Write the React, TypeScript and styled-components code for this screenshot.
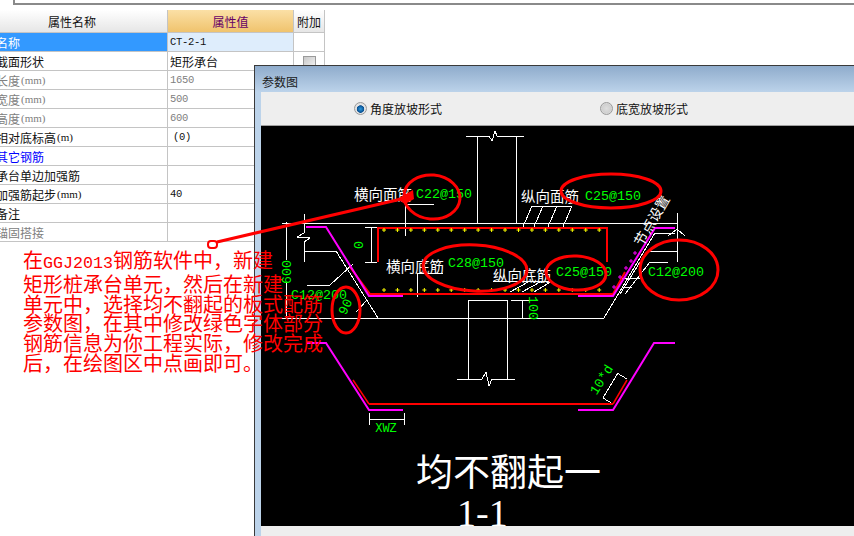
import React from 'react';
import styled, { createGlobalStyle } from 'styled-components';

const CJK = `'Noto Sans CJK SC', 'Liberation Sans', sans-serif`;
const MONO = `'Liberation Mono', 'Noto Sans CJK SC', monospace`;

const GlobalStyle = createGlobalStyle`
  html, body {
    margin: 0;
    padding: 0;
    background: #fff;
  }
`;

const Page = styled.div`
  position: relative;
  width: 854px;
  height: 536px;
  overflow: hidden;
  background: #fff;
  font-family: ${CJK};
`;

const TopFrame = styled.div`
  height: 3px;
  margin: 0 0 5px 13px;
  border-left: 2px solid #8a8a8a;
  border-bottom: 2px solid #8a8a8a;
`;

const PropertyGrid = styled.div`
  display: grid;
  grid-template-columns: 172px 126px 31px;
  width: 329px;
  margin-left: -4px;
`;

const HeaderCell = styled.div<{ $variant?: 'gold' | 'plain'; $shift?: number }>`
  box-sizing: border-box;
  height: 23px;
  display: flex;
  align-items: center;
  justify-content: center;
  padding-right: ${p => p.$shift || 0}px;
  font-size: 12px;
  color: ${p => (p.$variant === 'gold' ? '#660066' : '#111')};
  background: ${p =>
    p.$variant === 'gold'
      ? 'linear-gradient(#fbe0a6, #f0c36d)'
      : 'linear-gradient(#ffffff, #e6e6e6)'};
  border-right: 1px solid #c4c4c4;
  border-bottom: 1px solid #c4c4c4;
`;

const LabelCell = styled.div<{ $tone?: string; $selected?: boolean }>`
  box-sizing: border-box;
  height: 19px;
  display: flex;
  align-items: center;
  font-size: 12px;
  white-space: nowrap;
  overflow: hidden;
  color: ${p => (p.$selected ? '#fff' : p.$tone || '#111')};
  background: ${p => (p.$selected ? '#3399ff' : '#fff')};
  border-right: 1px solid #c4c4c4;
  border-bottom: 1px solid #c4c4c4;
`;

const Unit = styled.span`
  font-family: 'Liberation Serif', serif;
  font-size: 11px;
  margin-left: 1px;
`;

const ValueCell = styled.div<{ $tone?: string; $selected?: boolean; $latin?: boolean; $indent?: number }>`
  box-sizing: border-box;
  height: 19px;
  display: flex;
  align-items: center;
  padding-left: ${p => p.$indent || 2}px;
  white-space: pre;
  font-family: ${p => (p.$latin ? MONO : CJK)};
  font-size: ${p => (p.$latin ? '10.5px' : '12px')};
  letter-spacing: ${p => (p.$latin ? '-0.3px' : '0')};
  color: ${p => p.$tone || '#111'};
  background: ${p => (p.$selected ? '#deedfc' : '#fff')};
  border-right: 1px solid #c4c4c4;
  border-bottom: 1px solid #c4c4c4;
`;

const ExtraCell = styled.div`
  box-sizing: border-box;
  height: 19px;
  display: flex;
  align-items: center;
  justify-content: center;
  background: #fff;
  border-right: 1px solid #c4c4c4;
  border-bottom: 1px solid #c4c4c4;
`;

const CheckBox = styled.div`
  box-sizing: border-box;
  width: 13px;
  height: 13px;
  margin-top: 3px;
  border: 1px solid #9a9a9a;
  background: linear-gradient(135deg, #c8c8c8, #f4f4f4);
`;

const Dialog = styled.div`
  position: absolute;
  left: 254px;
  top: 65px;
  width: 620px;
  height: 490px;
  box-sizing: border-box;
  padding: 0 0 0 6px;
  border: 1px solid #3a3a3a;
  background: linear-gradient(#8faccc 0, #bcd3ea 26px, #bcd3ea 100%);
`;

const DialogTitle = styled.div`
  height: 26px;
  padding: 7px 0 0 1px;
  box-sizing: border-box;
  font-size: 12px;
  line-height: 18px;
  color: #1a1a1a;
`;

const Toolbar = styled.div`
  height: 33px;
  display: flex;
  align-items: center;
  padding-left: 93px;
  background: #eeeeee;
  border-bottom: 1px solid #a0a0a0;
`;

const Option = styled.label`
  display: flex;
  align-items: center;
  gap: 3px;
  width: 246px;
  font-size: 12px;
  color: #111;
`;

const Radio = styled.span<{ $checked?: boolean }>`
  box-sizing: border-box;
  width: 13px;
  height: 13px;
  border-radius: 50%;
  border: 1px solid #9a9a9a;
  background: ${p =>
    p.$checked
      ? 'radial-gradient(circle at 50% 55%, #2a9ae0 0, #0a4f90 42%, #e8e8e8 50%, #cfcfcf 100%)'
      : 'radial-gradient(circle, #dedede 0, #d0d0d0 55%, #f0f0f0 100%)'};
`;

const DrawingArea = styled.div`
  height: 400px;
  background: #000;
`;

const DialogFooter = styled.div`
  height: 30px;
  background: #eeeeee;
`;

const Drawing = styled.svg`
  display: block;
  width: 593px;
  height: 400px;
`;

const Markup = styled.svg`
  position: absolute;
  left: 0;
  top: 0;
  width: 854px;
  height: 536px;
  pointer-events: none;
`;

const Note = styled.div`
  position: absolute;
  left: 23px;
  top: 250px;
  font-size: 20px;
  line-height: 19.8px;
  color: #ff0000;
  white-space: nowrap;
`;

const NoteLatin = styled.span`
  font-family: 'Liberation Mono', monospace;
  font-size: 16.67px;
`;

const rows = [
  { label: '名称', value: 'CT-2-1', selected: true, latin: true },
  { label: '截面形状', value: '矩形承台', check: true },
  { label: '长度', unit: '(mm)', value: '1650', tone: '#808080', latin: true },
  { label: '宽度', unit: '(mm)', value: '500', tone: '#808080', latin: true },
  { label: '高度', unit: '(mm)', value: '600', tone: '#808080', latin: true },
  { label: '相对底标高', unit: '(m)', value: '(0)', latin: true, indent: 5 },
  { label: '其它钢筋', value: '', labelTone: '#0000ff' },
  { label: '承台单边加强筋', value: '' },
  { label: '加强筋起步', unit: '(mm)', value: '40', latin: true },
  { label: '备注', value: '' },
  { label: '锚固搭接', value: '', labelTone: '#808080' },
];

const WHITE_LINES = [
  // top column + break
  'M466 136H489L492 141L495 131L497 136H524',
  'M477 136V223M516 136V223',
  // footing outline
  'M282 223H677',
  'M281 318H378M378 318H604L655 233H675',
  'M336 251L378 318M304 251H336',
  'M304 214V233L297 237L310 238L304 242V262',
  'M286 222V260M286 283V318',
  'M307 285H330L353 264M356 312L367 300',
  // dims
  'M365 227H377M371 227V262M365 262H377',
  'M405 204H434M405 204V236',
  'M417 273H443M417 273V297',
  'M493 281H550',
  // hatch top
  'M532 206H572M532 206L522 229M543 206L533 229M557 206L547 229M572 206L562 229',
  // hatch bottom
  'M510 292L530 281M522 292L542 281M534 292L552 281',
  // right side
  'M677 213V262M668 236L677 229L685 236',
  'M647 251H677M650 262H668',
  'M622 278H640M622 287H632M640 262L620 294M650 262L625 294',
  // lower column
  'M468 300H507M468 300V379M507 300V379',
  'M457 379H482L486 372L489 386L492 379H515',
  'M511 300H532M522 300V318M515 318H530',
  // lower dims
  'M369 419H404M369 413V425M404 413V425',
  'M618 373L603 398M617 373L627 379M603 398L613 404',
];

const FOOTING_PLUS_X = Array.from({ length: 17 }, (_, i) => 384 + i * 13.45);
const SLOPE_PLUS = [
  [635, 253],
  [631, 261],
  [626, 268],
  [620, 277],
  [614, 287],
];

const plusPath = (x: number, y: number) => `M${x - 2} ${y}H${x + 2}M${x} ${y - 2}V${y + 2}`;

const greenFont = { fontFamily: MONO, fontSize: 13.3, fill: '#00ff00' };
const whiteFont = { fontFamily: CJK, fontSize: 14.5, fill: '#ffffff' };

const GreenText = ({ x, y, rotate, children }: { x: number; y: number; rotate?: number; children: string }) => (
  <text
    {...greenFont}
    x={x}
    y={y}
    textAnchor="middle"
    dominantBaseline="central"
    transform={rotate ? `rotate(${rotate} ${x} ${y})` : undefined}
  >
    {children}
  </text>
);

const WhiteText = ({ x, y, children }: { x: number; y: number; children: string }) => (
  <text {...whiteFont} x={x} y={y} dominantBaseline="central">
    {children}
  </text>
);

// section drawing, viewBox is in page pixels so the numbers read off the screenshot directly
const SectionDrawing = () => (
  <Drawing viewBox="261 126 593 400">
    <path d={WHITE_LINES.join(' ')} fill="none" stroke="#fff" strokeWidth={1} shapeRendering="crispEdges" />
    <path
      d="M378 262V228H607V262M350 267L370 294H613L625 272"
      fill="none"
      stroke="#ff0000"
      strokeWidth={2}
    />
    <path
      d="M306 227H326L369 296H403M578 296H613L655 228H675"
      fill="none"
      stroke="#ff00ff"
      strokeWidth={2}
    />
    <path
      d="M307 343H326L369 410H403M578 410H613L654 343H675"
      fill="none"
      stroke="#ff00ff"
      strokeWidth={2}
    />
    <path d="M369 404H613" fill="none" stroke="#ff0000" strokeWidth={2} />
    <path d="M353 380L369 404M613 404L627 380" fill="none" stroke="#ff0000" strokeWidth={1.5} />
    <path
      d={FOOTING_PLUS_X.map(x => plusPath(x, 230) + plusPath(x, 290)).join(' ')}
      stroke="#ffff00"
      strokeWidth={1}
      fill="none"
    />
    <path d={SLOPE_PLUS.map(([x, y]) => plusPath(x, y)).join(' ')} stroke="#ff00ff" strokeWidth={1} fill="none" />

    <WhiteText x={354} y={193}>横向面筋</WhiteText>
    <WhiteText x={521} y={195}>纵向面筋</WhiteText>
    <WhiteText x={386} y={265}>横向底筋</WhiteText>
    <WhiteText x={493} y={274}>纵向底筋</WhiteText>
    <text {...whiteFont} fontSize={14} x={651} y={220} textAnchor="middle" dominantBaseline="central" transform="rotate(-60 651 220)">
      节点设置
    </text>

    <GreenText x={444} y={194}>C22@150</GreenText>
    <GreenText x={613} y={196}>C25@150</GreenText>
    <GreenText x={476} y={263}>C28@150</GreenText>
    <GreenText x={584} y={272}>C25@150</GreenText>
    <GreenText x={676} y={272}>C12@200</GreenText>
    <GreenText x={319} y={295}>C12@200</GreenText>
    <GreenText x={287} y={272} rotate={-90}>600</GreenText>
    <GreenText x={359} y={245} rotate={-90}>0</GreenText>
    <GreenText x={346} y={307} rotate={-65}>90</GreenText>
    <GreenText x={532} y={308} rotate={90}>100</GreenText>
    <GreenText x={602} y={380} rotate={-58}>10*d</GreenText>
    <text {...greenFont} fontSize={12} x={386} y={429} textAnchor="middle" dominantBaseline="central">
      XWZ
    </text>

    <text x={416} y={470} fontFamily={CJK} fontSize={37} fill="#fff" dominantBaseline="central">
      均不翻起一
    </text>
    <text x={457} y={513} fontFamily="'Liberation Serif', serif" fontSize={38} fill="#fff" dominantBaseline="central">
      1-1
    </text>
  </Drawing>
);

const ELLIPSES = [
  { cx: 432, cy: 197, rx: 28, ry: 22, tilt: 5 },
  { cx: 611, cy: 191, rx: 50, ry: 17, tilt: 0 },
  { cx: 475, cy: 268, rx: 52, ry: 23, tilt: 3 },
  { cx: 576, cy: 273, rx: 30, ry: 17, tilt: 3 },
  { cx: 679, cy: 270, rx: 39, ry: 30, tilt: 0 },
  { cx: 346, cy: 310, rx: 14, ry: 23, tilt: 0 },
];

const Annotations = () => (
  <Markup viewBox="0 0 854 536">
    <rect x={208} y={241} width={9} height={7} rx={3} fill="#fff" stroke="#ff0000" strokeWidth={2} />
    <path d="M217 242L410 197" stroke="#ff0000" strokeWidth={3} fill="none" />
    <polygon points="397,199 413,190 414,199 405,204" fill="#ff0000" />
    {ELLIPSES.map(e => (
      <ellipse
        key={e.cx}
        cx={e.cx}
        cy={e.cy}
        rx={e.rx}
        ry={e.ry}
        fill="none"
        stroke="#ff0000"
        strokeWidth={3}
        transform={`rotate(${e.tilt} ${e.cx} ${e.cy})`}
      />
    ))}
  </Markup>
);

export default function App(): JSX.Element {
  return (
    <Page>
      <GlobalStyle />
      <TopFrame />
      <PropertyGrid>
        <HeaderCell $shift={19}>属性名称</HeaderCell>
        <HeaderCell $variant="gold">属性值</HeaderCell>
        <HeaderCell>附加</HeaderCell>
        {rows.map(row => (
          <React.Fragment key={row.label}>
            <LabelCell $selected={row.selected} $tone={row.labelTone || row.tone}>
              {row.label}
              {row.unit && <Unit>{row.unit}</Unit>}
            </LabelCell>
            <ValueCell $selected={row.selected} $tone={row.tone} $latin={row.latin} $indent={row.indent}>
              {row.value}
            </ValueCell>
            <ExtraCell>{row.check && <CheckBox />}</ExtraCell>
          </React.Fragment>
        ))}
      </PropertyGrid>

      <Dialog>
        <DialogTitle>参数图</DialogTitle>
        <Toolbar>
          <Option>
            <Radio $checked />
            角度放坡形式
          </Option>
          <Option>
            <Radio />
            底宽放坡形式
          </Option>
        </Toolbar>
        <DrawingArea>
          <SectionDrawing />
        </DrawingArea>
        <DialogFooter />
      </Dialog>

      <Annotations />
      <Note>
        在<NoteLatin>GGJ2013</NoteLatin>钢筋软件中，新建
        <br />
        矩形桩承台单元，然后在新建
        <br />
        单元中，选择均不翻起的板式配筋
        <br />
        参数图，在其中修改绿色字体部分
        <br />
        钢筋信息为你工程实际，修改完成
        <br />
        后，在绘图区中点画即可。
      </Note>
    </Page>
  );
}
